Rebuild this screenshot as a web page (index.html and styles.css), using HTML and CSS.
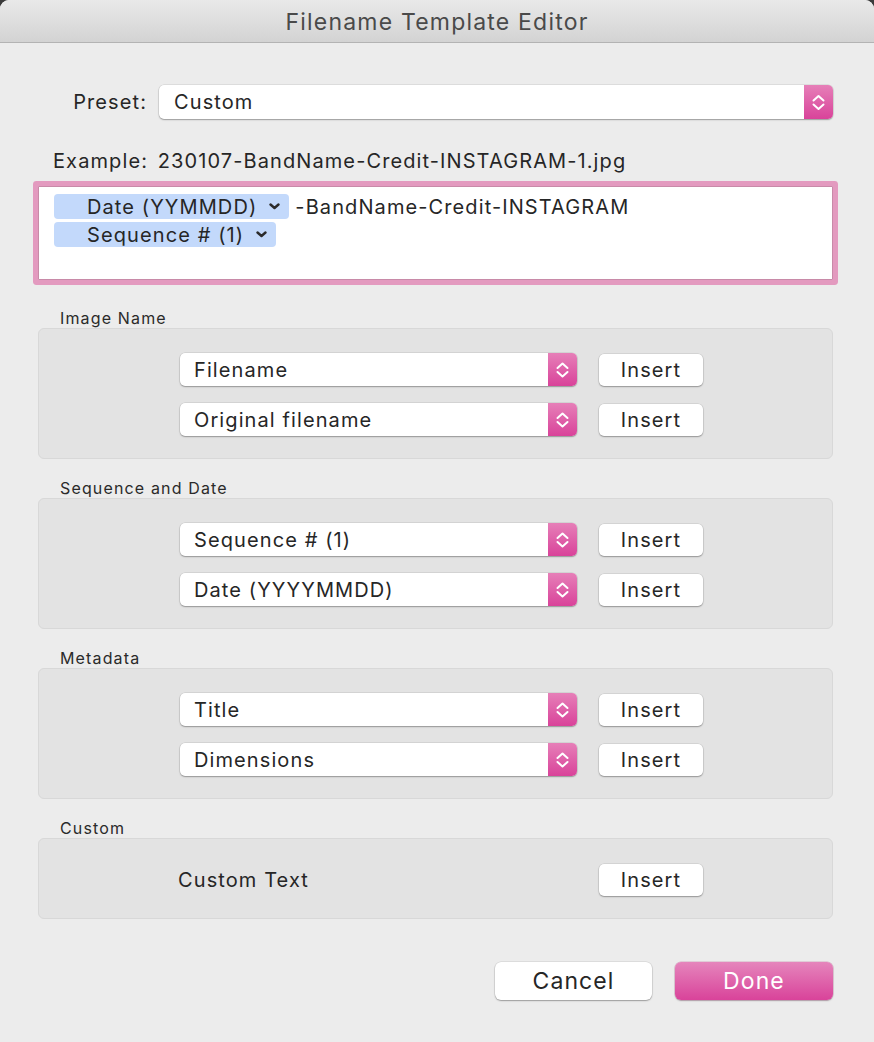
FILE: index.html
```html
<!DOCTYPE html>
<html>
<head>
<meta charset="utf-8">
<title>Filename Template Editor</title>
<link rel="stylesheet" href="styles.css">
</head>
<body>
<div class="window">
  <div class="titlebar">Filename Template Editor</div>
  <div class="content">
    <div class="preset-row">
      <span class="preset-label">Preset:</span>
      <div class="popup popup-wide">
        <span class="popup-text">Custom</span>
        <span class="stepper"><svg width="29" height="34" viewBox="0 0 29 34"><path d="M9.5 15.5 L14.5 11 L19.5 15.5 M9.5 19.5 L14.5 24 L19.5 19.5" fill="none" stroke="#fff" stroke-width="2" stroke-linecap="round" stroke-linejoin="round"/></svg></span>
      </div>
    </div>
    <div class="example">Example: 230107-BandName-Credit-INSTAGRAM-1.jpg</div>
    <div class="token-field">
      <div class="token-line"><span class="token">Date (YYMMDD)<svg class="chev" width="11" height="7" viewBox="0 0 11 7"><path d="M1.5 1.5 L5.5 5 L9.5 1.5" fill="none" stroke="#2b2b2b" stroke-width="2.4" stroke-linecap="round" stroke-linejoin="round"/></svg></span><span class="plain">-BandName-Credit-INSTAGRAM</span></div>
      <div class="token-line"><span class="token">Sequence # (1)<svg class="chev" width="11" height="7" viewBox="0 0 11 7"><path d="M1.5 1.5 L5.5 5 L9.5 1.5" fill="none" stroke="#2b2b2b" stroke-width="2.4" stroke-linecap="round" stroke-linejoin="round"/></svg></span></div>
    </div>

    <section class="group group-first">
      <div class="group-label">Image Name</div>
      <div class="group-box">
        <div class="row">
          <div class="popup"><span class="popup-text">Filename</span><span class="stepper"><svg width="29" height="33" viewBox="0 0 29 33"><path d="M9.5 15 L14.5 10.5 L19.5 15 M9.5 19 L14.5 23.5 L19.5 19" fill="none" stroke="#fff" stroke-width="2" stroke-linecap="round" stroke-linejoin="round"/></svg></span></div>
          <button class="btn insert">Insert</button>
        </div>
        <div class="row">
          <div class="popup"><span class="popup-text">Original filename</span><span class="stepper"><svg width="29" height="33" viewBox="0 0 29 33"><path d="M9.5 15 L14.5 10.5 L19.5 15 M9.5 19 L14.5 23.5 L19.5 19" fill="none" stroke="#fff" stroke-width="2" stroke-linecap="round" stroke-linejoin="round"/></svg></span></div>
          <button class="btn insert">Insert</button>
        </div>
      </div>
    </section>

    <section class="group">
      <div class="group-label">Sequence and Date</div>
      <div class="group-box">
        <div class="row">
          <div class="popup"><span class="popup-text">Sequence # (1)</span><span class="stepper"><svg width="29" height="33" viewBox="0 0 29 33"><path d="M9.5 15 L14.5 10.5 L19.5 15 M9.5 19 L14.5 23.5 L19.5 19" fill="none" stroke="#fff" stroke-width="2" stroke-linecap="round" stroke-linejoin="round"/></svg></span></div>
          <button class="btn insert">Insert</button>
        </div>
        <div class="row">
          <div class="popup"><span class="popup-text">Date (YYYYMMDD)</span><span class="stepper"><svg width="29" height="33" viewBox="0 0 29 33"><path d="M9.5 15 L14.5 10.5 L19.5 15 M9.5 19 L14.5 23.5 L19.5 19" fill="none" stroke="#fff" stroke-width="2" stroke-linecap="round" stroke-linejoin="round"/></svg></span></div>
          <button class="btn insert">Insert</button>
        </div>
      </div>
    </section>

    <section class="group">
      <div class="group-label">Metadata</div>
      <div class="group-box">
        <div class="row">
          <div class="popup"><span class="popup-text">Title</span><span class="stepper"><svg width="29" height="33" viewBox="0 0 29 33"><path d="M9.5 15 L14.5 10.5 L19.5 15 M9.5 19 L14.5 23.5 L19.5 19" fill="none" stroke="#fff" stroke-width="2" stroke-linecap="round" stroke-linejoin="round"/></svg></span></div>
          <button class="btn insert">Insert</button>
        </div>
        <div class="row">
          <div class="popup"><span class="popup-text">Dimensions</span><span class="stepper"><svg width="29" height="33" viewBox="0 0 29 33"><path d="M9.5 15 L14.5 10.5 L19.5 15 M9.5 19 L14.5 23.5 L19.5 19" fill="none" stroke="#fff" stroke-width="2" stroke-linecap="round" stroke-linejoin="round"/></svg></span></div>
          <button class="btn insert">Insert</button>
        </div>
      </div>
    </section>

    <section class="group">
      <div class="group-label">Custom</div>
      <div class="group-box">
        <div class="row row-custom">
          <span class="custom-label">Custom Text</span>
          <button class="btn insert">Insert</button>
        </div>
      </div>
    </section>

    <div class="actions">
      <button class="btn action cancel">Cancel</button>
      <button class="btn action done">Done</button>
    </div>
  </div>
</div>
</body>
</html>
```

FILE: styles.css
```css
* { box-sizing: border-box; }

html, body {
  margin: 0;
  padding: 0;
  background: #3a3a3a;
}

body {
  font-family: "Inter", "Liberation Sans", sans-serif;
  color: #262626;
  letter-spacing: 1.1px;
}

.window {
  width: 874px;
  height: 1042px;
  background: #ececec;
  border-radius: 9px 9px 0 0;
  overflow: hidden;
}

.titlebar {
  height: 43px;
  background: linear-gradient(#e9e9e9, #d3d3d3);
  border-bottom: 1px solid #b3b3b3;
  text-align: center;
  font-size: 23px;
  letter-spacing: 1.2px;
  line-height: 45px;
  color: #4a4a4a;
}

.content {
  padding: 0 41px 0 38px;
}

/* Preset row */
.preset-row {
  display: flex;
  align-items: center;
  margin-top: 42px;
  height: 34px;
}

.preset-label {
  width: 109px;
  text-align: right;
  margin-right: 12px;
  font-size: 20px;
}

.popup {
  display: flex;
  align-items: center;
  width: 397px;
  height: 33px;
  background: #fff;
  border-radius: 5px;
  box-shadow: 0 0 0 0.5px rgba(0,0,0,0.12), 0 1px 1.5px rgba(0,0,0,0.3);
  overflow: hidden;
}

.popup-wide {
  flex: 1;
  height: 34px;
}

.popup-text {
  flex: 1;
  padding-left: 14px;
  font-size: 20px;
}

.popup-wide .popup-text { padding-left: 15px; }

.stepper {
  width: 29px;
  align-self: stretch;
  display: flex;
  align-items: center;
  justify-content: center;
  background: linear-gradient(#e67fb8, #d9439a);
}

.stepper svg { display: block; }

/* Example */
.example {
  margin-top: 31px;
  padding-left: 15px;
  font-size: 20px;
  line-height: 22px;
  word-spacing: 3px;
}

/* Token field */
.token-field {
  margin-top: 14px;
  height: 94px;
  background: #fff;
  border: 1px solid #c88aa8;
  box-shadow: 0 0 0 5px #e39abf;
  border-radius: 1px;
  padding: 7px 0 0 15px;
}

.token-line {
  display: flex;
  align-items: center;
  height: 25px;
  margin-bottom: 3px;
  font-size: 20px;
}

.token {
  display: flex;
  align-items: center;
  height: 25px;
  padding: 0 9px 0 33px;
  background: #c3d9fb;
  border-radius: 4px;
}

.chev {
  margin-left: 12px;
  display: block;
}

.plain {
  margin-left: 6px;
}

/* Groups */
.group { margin-top: 19px; }
.group-first { margin-top: 28px; }

.group-label {
  height: 20px;
  line-height: 20px;
  padding-left: 22px;
  font-size: 16px;
  letter-spacing: 1.15px;
  color: #2a2a2a;
}

.group-box {
  background: #e3e3e3;
  border: 1px solid #d8d8d8;
  border-radius: 6px;
  padding: 24px 0 22px 141px;
  display: flex;
  flex-direction: column;
  gap: 17px;
}

.row {
  display: flex;
  align-items: center;
  height: 33px;
  gap: 22px;
}

.row-custom {
  margin-left: -2px;
}

.custom-label {
  width: 399px;
  font-size: 20px;
}

.btn {
  font-family: inherit;
  letter-spacing: inherit;
  color: #262626;
  background: #fff;
  border: none;
  border-radius: 5px;
  box-shadow: 0 0 0 0.5px rgba(0,0,0,0.12), 0 1px 1.5px rgba(0,0,0,0.3);
  padding: 0;
  margin: 0;
}

.insert {
  width: 104px;
  height: 32px;
  font-size: 20px;
}

.actions {
  display: flex;
  justify-content: flex-end;
  gap: 23px;
  margin-top: 43px;
}

.action {
  height: 38px;
  font-size: 23px;
  border-radius: 6px;
}

.cancel { width: 157px; }

.done {
  width: 158px;
  color: #fff;
  background: linear-gradient(#e585bc, #d9439a);
  box-shadow: 0 0 0 0.5px rgba(160,30,100,0.3), 0 1px 1.5px rgba(0,0,0,0.25);
}
```
